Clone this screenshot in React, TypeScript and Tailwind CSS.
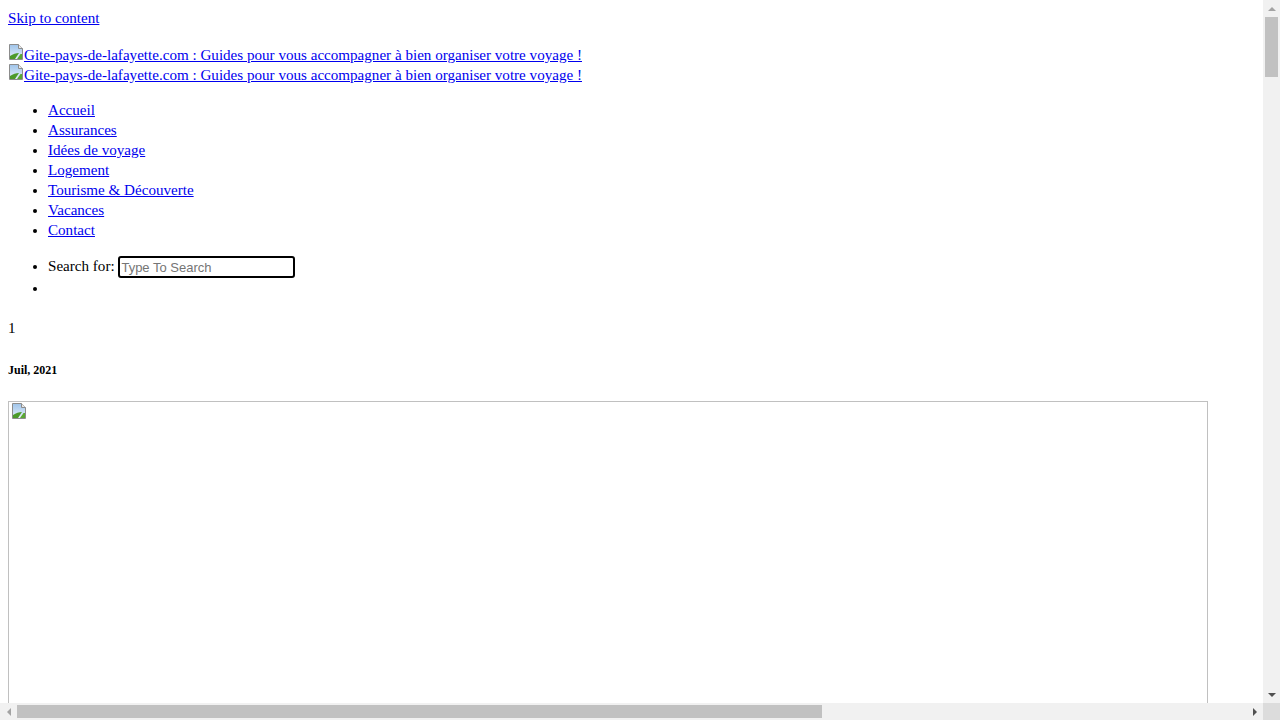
import React from "react";

function BrokenImg() {
  return (
    <svg width="16" height="16" viewBox="0 0 16 16" className="inline-block align-baseline">
      <defs>
        <linearGradient id="sky" x1="0" y1="0" x2="0" y2="1">
          <stop offset="0" stopColor="#9fc4ea" />
          <stop offset="1" stopColor="#e6f0fa" />
        </linearGradient>
      </defs>
      <path d="M1.5 0.5 H10.5 L14.5 4.5 V15.5 H1.5 Z" fill="url(#sky)" stroke="#8c8c8c" />
      <path d="M10.5 0.5 V4.5 H14.5" fill="#e8e8e8" stroke="#8c8c8c" />
      <path d="M2 15 L2 12 C5 10 8 9 11 9 L7 15 Z" fill="#4c9a2a" />
      <path d="M9 15 L12.5 10 L14 10 L14 15 Z" fill="#5aa832" />
    </svg>
  );
}

function Tri({ dir, color }: { dir: "up" | "down" | "left" | "right"; color: string }) {
  const pts =
    dir === "up"
      ? "0,4 4,0 8,4"
      : dir === "down"
      ? "0,0 8,0 4,4"
      : dir === "left"
      ? "4,0 4,8 0,4"
      : "0,0 4,4 0,8";
  const w = dir === "up" || dir === "down" ? 8 : 4;
  const h = dir === "up" || dir === "down" ? 4 : 8;
  return (
    <svg width={w} height={h} viewBox={`0 0 ${w} ${h}`}>
      <polygon points={pts} fill={color} />
    </svg>
  );
}

export default function App() {
  const link = "text-[#0000ee] underline";
  return (
    <div className="w-[1280px] h-[720px] overflow-hidden flex flex-col bg-white">
      <div className="flex h-[703px]">
        <div className="flex-1 overflow-hidden font-['Liberation_Serif',serif] text-[15.1px] leading-[20px] text-black p-[8px]">
          <div className="h-[20px]">
            <a href="#" className={link}>Skip to content</a>
          </div>

          <div className="mt-[16px]">
            <div className="h-[20px] whitespace-nowrap">
              <a href="#" className={link}>
                <BrokenImg />
                Gite-pays-de-lafayette.com : Guides pour vous accompagner à bien organiser votre voyage !
              </a>
            </div>
            <div className="h-[20px] whitespace-nowrap">
              <a href="#" className={link}>
                <BrokenImg />
                Gite-pays-de-lafayette.com : Guides pour vous accompagner à bien organiser votre voyage !
              </a>
            </div>
          </div>

          <ul className="mt-[16px] list-disc pl-[40px]">
            {["Accueil", "Assurances", "Idées de voyage", "Logement", "Tourisme & Découverte", "Vacances", "Contact"].map((t) => (
              <li key={t} className="h-[20px]">
                <a href="#" className={link}>{t}</a>
              </li>
            ))}
          </ul>

          <ul className="mt-[16px] list-disc pl-[40px]">
            <li className="h-[22px] whitespace-nowrap">
              <span className="align-top">Search for: </span>
              <input
                type="text"
                placeholder="Type To Search"
                className="align-top w-[177px] h-[22px] border-2 border-black rounded-[3px] px-[1px] font-['Liberation_Sans',Arial,sans-serif] text-[13px] leading-[16px] placeholder:text-[#757575] outline-none"
              />
            </li>
            <li className="h-[20px]">&nbsp;</li>
          </ul>

          <div className="mt-[20px] h-[20px]">1</div>

          <h6 className="mt-[25px] text-[12px] leading-[14px] font-bold">Juil, 2021</h6>

          <div className="mt-[24px] w-[1200px] h-[800px] border border-[#c0c0c0] pl-[2px] pt-[1px]">
            <BrokenImg />
          </div>
        </div>

        <div className="w-[17px] bg-[#f1f1f1] flex flex-col">
          <div className="h-[17px] flex items-center justify-center">
            <Tri dir="up" color="#a3a3a3" />
          </div>
          <div className="flex-1 flex flex-col">
            <div className="mx-[2px] h-[60px] bg-[#c1c1c1]" />
          </div>
          <div className="h-[17px] flex items-center justify-center">
            <Tri dir="down" color="#505050" />
          </div>
        </div>
      </div>

      <div className="flex h-[17px]">
        <div className="flex-1 bg-[#f1f1f1] flex">
          <div className="w-[17px] flex items-center justify-center">
            <Tri dir="left" color="#a3a3a3" />
          </div>
          <div className="flex-1 flex items-center">
            <div className="w-[805px] h-[13px] bg-[#c1c1c1]" />
          </div>
          <div className="w-[17px] flex items-center justify-center">
            <Tri dir="right" color="#505050" />
          </div>
        </div>
        <div className="w-[17px] bg-[#dcdcdc]" />
      </div>
    </div>
  );
}
